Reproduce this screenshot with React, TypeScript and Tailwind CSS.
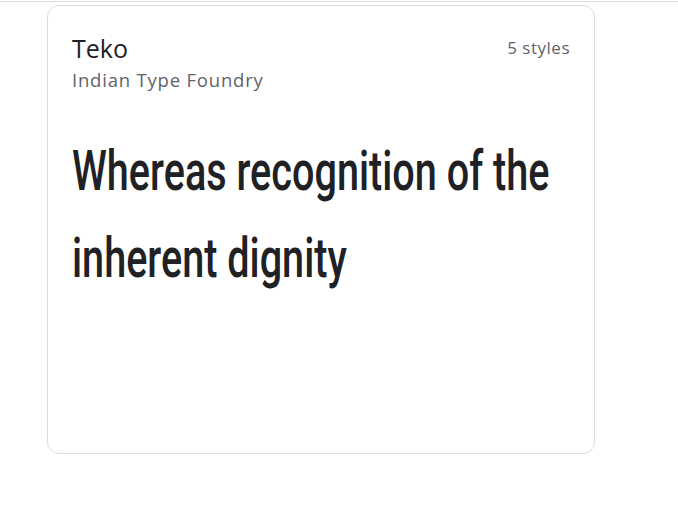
export default function App() {
  return (
    <div className="w-[678px] h-[518px] bg-white pt-px" style={{ fontFamily: "'Open Sans', Roboto, sans-serif" }}>
      <div className="border-t border-[#dadce0]" />
      <div className="ml-[47px] mt-[3px] w-[548px] h-[449px] rounded-[12px] border border-[#dadce0] px-6 pt-[26px]">
        <div className="flex justify-between items-start">
          <div>
            <div className="text-[25px] leading-[32px] text-[#202124]">Teko</div>
            <div className="text-[18.5px] leading-[24px] text-[#5f6368] tracking-[0.8px] mt-[4px]">Indian Type Foundry</div>
          </div>
          <div className="text-[17px] leading-[22px] text-[#5f6368] tracking-[0.5px] mt-[5px]">5 styles</div>
        </div>
        <div
          className="mt-[36px] text-[#202124] font-medium"
          style={{ fontFamily: "Roboto, sans-serif" }}
        >
          <div className="h-[87px] text-[55px] leading-[87px] whitespace-nowrap origin-left scale-x-[0.72]">
            Whereas recognition of the
          </div>
          <div className="h-[87px] text-[55px] leading-[87px] whitespace-nowrap origin-left scale-x-[0.72]">
            inherent dignity
          </div>
        </div>
      </div>
    </div>
  );
}
